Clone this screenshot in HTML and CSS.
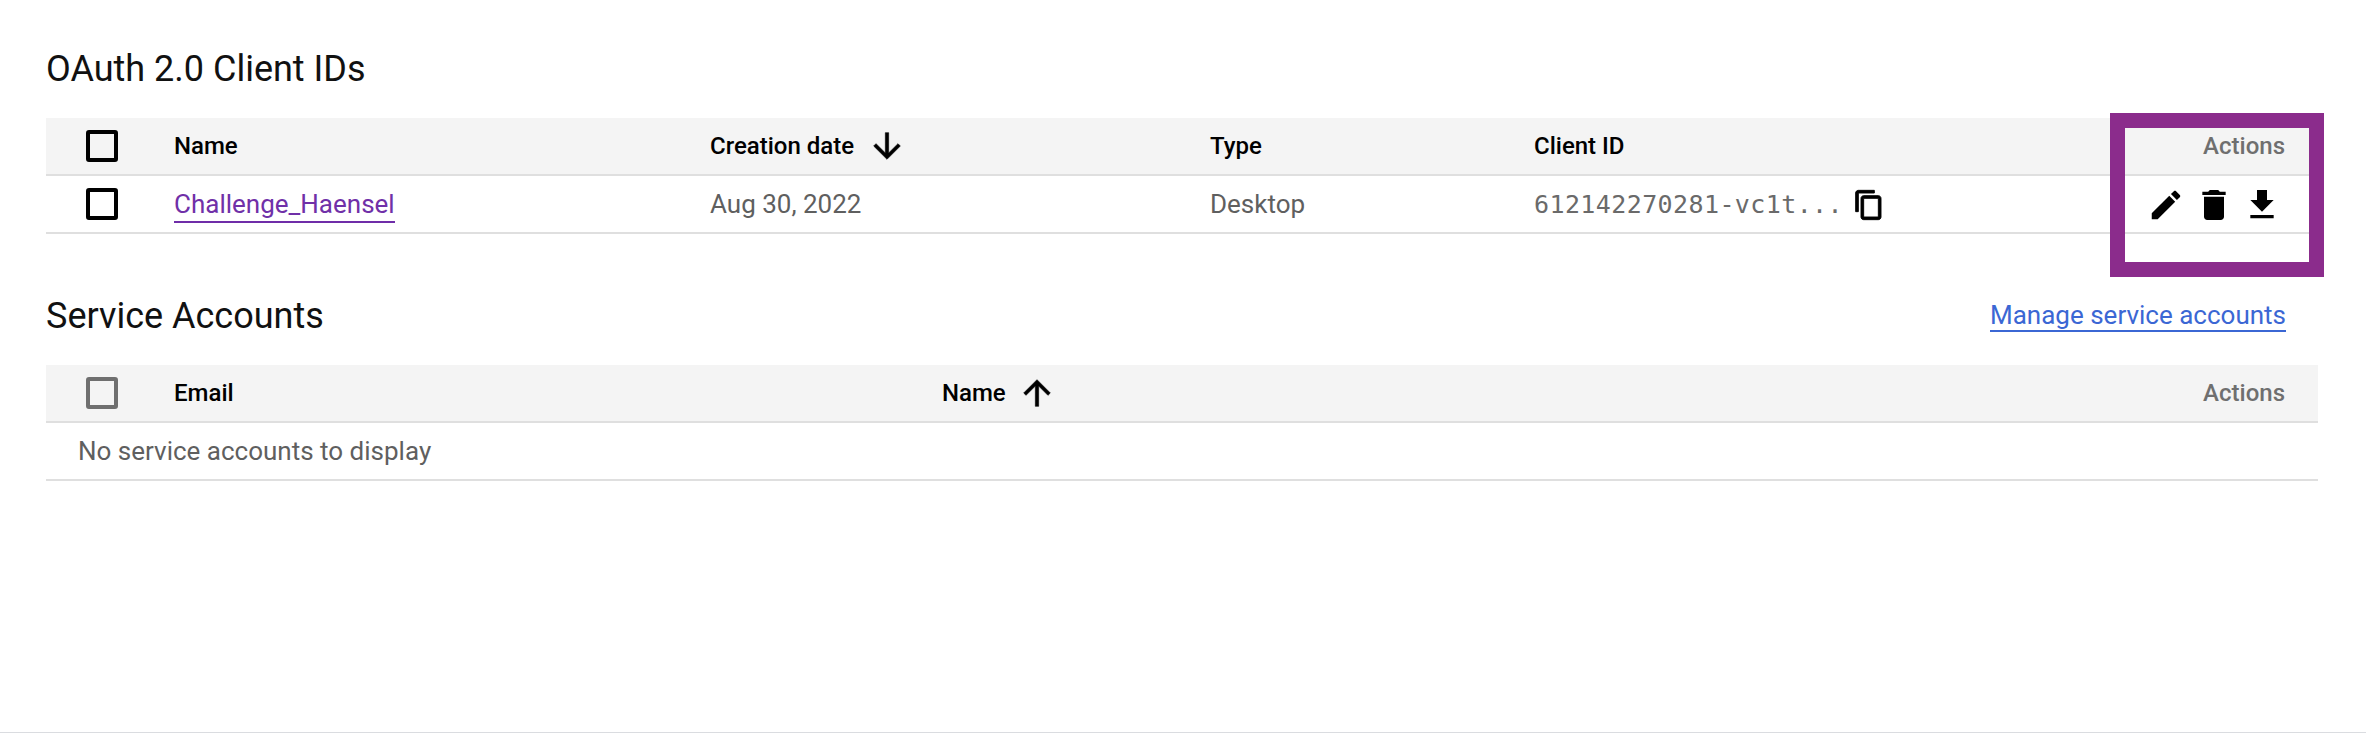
FILE: index.html
```html
<!DOCTYPE html>
<html lang="en">
<head>
  <meta charset="UTF-8">
  <meta name="viewport" content="width=device-width, initial-scale=1">
  <title>Credentials</title>
  <link rel="stylesheet" href="styles.css">
</head>
<body>
  <main class="page">

    <!-- OAuth clients -->
    <section class="block">
      <div class="block-head">
        <h2>OAuth 2.0 Client IDs</h2>
      </div>
      <table class="grid clients">
        <thead>
          <tr>
            <th class="check-col"><span class="check"></span></th>
            <th class="name-col">Name</th>
            <th class="date-col"><span class="sort">Creation date
              <svg class="sort-icon" viewBox="0 0 24 24"><path d="M20 12l-1.41-1.41L13 16.17V4h-2v12.17l-5.58-5.59L4 12l8 8 8-8z"/></svg>
            </span></th>
            <th class="type-col">Type</th>
            <th>Client ID</th>
            <th class="actions-col">Actions</th>
          </tr>
        </thead>
        <tbody>
          <tr>
            <td class="check-col"><span class="check"></span></td>
            <td><a class="client-link" href="#">Challenge_Haensel</a></td>
            <td>Aug 30, 2022</td>
            <td>Desktop</td>
            <td>
              <span class="client-id">612142270281-vc1t...</span>
              <svg class="copy-icon" viewBox="0 0 24 24"><path d="M16 1H4c-1.1 0-2 .9-2 2v14h2V3h12V1zm3 4H8c-1.1 0-2 .9-2 2v14c0 1.1.9 2 2 2h11c1.1 0 2-.9 2-2V7c0-1.1-.9-2-2-2zm0 16H8V7h11v14z"/></svg>
            </td>
            <td class="row-actions">
              <div class="icons">
                <svg class="pencil" viewBox="0 0 24 24"><path d="M3 17.25V21h3.75L17.81 9.94l-3.75-3.75L3 17.25zM20.71 7.04c.39-.39.39-1.02 0-1.41l-2.34-2.34c-.39-.39-1.02-.39-1.41 0l-1.83 1.83 3.75 3.75 1.83-1.83z"/></svg>
                <svg viewBox="0 0 24 24"><path d="M6 19c0 1.1.9 2 2 2h8c1.1 0 2-.9 2-2V7H6v12zM19 4h-3.5l-1-1h-5l-1 1H5v2h14V4z"/></svg>
                <svg viewBox="0 0 24 24"><path d="M19 9h-4V3H9v6H5l7 7 7-7zM5 18v2h14v-2H5z"/></svg>
              </div>
            </td>
          </tr>
        </tbody>
      </table>
    </section>

    <!-- Service accounts -->
    <section class="block">
      <div class="block-head">
        <h2>Service Accounts</h2>
        <a class="manage-link" href="#">Manage service accounts</a>
      </div>
      <table class="grid accounts">
        <thead>
          <tr>
            <th class="check-col"><span class="check check-off"></span></th>
            <th class="email-col">Email</th>
            <th><span class="sort">Name
              <svg class="sort-icon" viewBox="0 0 24 24"><path d="M4 12l1.41 1.41L11 7.83V20h2V7.83l5.58 5.59L20 12l-8-8-8 8z"/></svg>
            </span></th>
            <th class="actions-col">Actions</th>
          </tr>
        </thead>
        <tbody>
          <tr>
            <td class="empty" colspan="4">No service accounts to display</td>
          </tr>
        </tbody>
      </table>
    </section>

    <!-- Highlight drawn over the actions column -->
    <div class="highlight"></div>
  </main>
</body>
</html>
```

FILE: styles.css
```css
* { box-sizing: border-box; }
html, body { margin: 0; height: 100%; overflow: hidden; }
body { font-family: Roboto, "Liberation Sans", sans-serif; background: #fff; color: #5f5f5f; }

.page { position: relative; height: 733px; padding: 45px 48px 0 46px; border-bottom: 1px solid #dadce0; }
.block { margin-bottom: 58px; }
.block-head { display: flex; justify-content: space-between; align-items: center; height: 48px; margin-bottom: 25px; }
h2 { margin: 0; font-size: 36px; font-weight: 400; color: #111; }

.grid { width: 100%; border-collapse: separate; border-spacing: 0; table-layout: fixed; font-size: 26px; }
.grid th, .grid td { height: 58px; padding: 0; border-bottom: 2px solid #dfdfdf; text-align: left; vertical-align: middle; }
.grid th { background: #f4f4f4; font-size: 24px; font-weight: 500; color: #000; }
.check-col { width: 128px; }
.name-col { width: 536px; }
.date-col { width: 500px; }
.type-col { width: 324px; }
.email-col { width: 768px; }
.grid .actions-col { width: 220px; padding-right: 33px; text-align: right; color: #6f6f6f; }

.check { display: block; width: 32px; height: 32px; margin-left: 40px; border: 4px solid #000; border-radius: 3px; }
.check-off { border-color: #6f6f6f; }

.sort { display: flex; align-items: center; gap: 11px; }
.sort-icon { width: 40px; height: 40px; fill: #000; stroke: #000; stroke-width: .35; }
.date-col .sort-icon { margin-left: 2px; }

.client-link { color: #7030a8; text-decoration: none; border-bottom: 2px solid #6f2da8; padding-bottom: 2px; }
.client-id { font-family: "DejaVu Sans Mono", monospace; font-size: 25px; letter-spacing: .4px; color: #6a6a6a; vertical-align: middle; }
.copy-icon { width: 32px; height: 32px; margin-left: 4px; fill: #000; stroke: #000; stroke-width: .7; vertical-align: middle; }

.icons { display: flex; justify-content: flex-end; align-items: center; gap: 8px; padding-top: 2px; }
.icons svg { width: 40px; height: 40px; fill: #000; }
.icons .pencil { width: 38px; height: 38px; margin: 0 1px; }
.grid .row-actions { padding-right: 36px; }

.grid .empty { padding-left: 32px; }

.manage-link { margin-right: 32px; font-size: 26px; color: #3b67d4; text-decoration: none; border-bottom: 2px solid #3b67d4; }

.highlight { position: absolute; left: 2110px; top: 113px; width: 214px; height: 164px; border: 15px solid #8b2c8c; }
```
